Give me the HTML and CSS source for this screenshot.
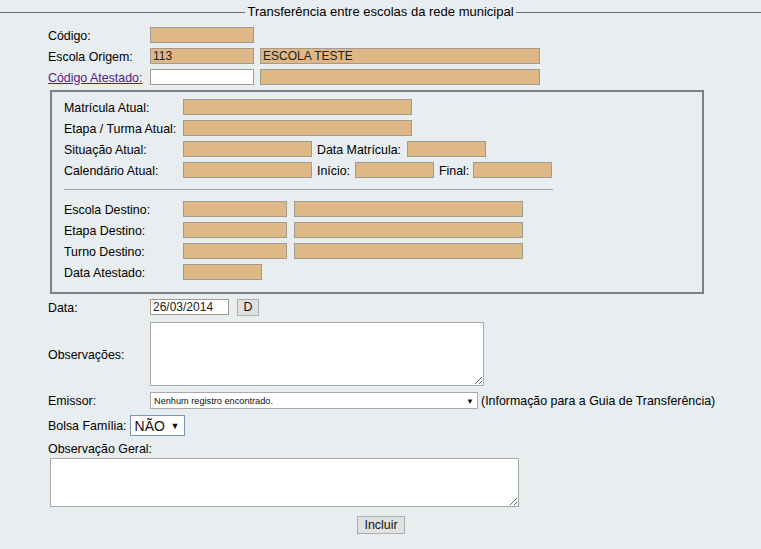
FILE: index.html
```html
<!DOCTYPE html>
<html lang="pt-BR">
<head>
<meta charset="utf-8">
<title>Transferência entre escolas da rede municipal</title>
<link rel="stylesheet" href="styles.css">
</head>
<body>
<div class="page">
  <div class="legend"><span class="legend-text">Transferência entre escolas da rede municipal</span></div>
  <form class="form">
    <div class="row r-first">
      <span class="lbl">Código:</span>
      <input class="f w104" type="text">
    </div>
    <div class="row">
      <span class="lbl">Escola Origem:</span>
      <input class="f w104" type="text" value="113">
      <input class="f w280 ml6" type="text" value="ESCOLA TESTE">
    </div>
    <div class="row">
      <span class="lbl"><a class="link" href="#">Código Atestado:</a></span>
      <input class="f white w104" type="text">
      <input class="f w280 ml6" type="text">
    </div>

    <div class="box">
      <div class="irow">
        <span class="ilbl">Matrícula Atual:</span>
        <input class="f w229" type="text">
      </div>
      <div class="irow">
        <span class="ilbl">Etapa / Turma Atual:</span>
        <input class="f w229" type="text">
      </div>
      <div class="irow">
        <span class="ilbl">Situação Atual:</span>
        <input class="f w129" type="text">
        <span class="sub w90">Data Matrícula:</span>
        <input class="f w79" type="text">
      </div>
      <div class="irow">
        <span class="ilbl">Calendário Atual:</span>
        <input class="f w129" type="text">
        <span class="sub w38">Início:</span>
        <input class="f w79" type="text">
        <span class="sub w34">Final:</span>
        <input class="f w79" type="text">
      </div>
      <div class="sep"></div>
      <div class="irow">
        <span class="ilbl">Escola Destino:</span>
        <input class="f w104" type="text">
        <input class="f w229 ml7" type="text">
      </div>
      <div class="irow">
        <span class="ilbl">Etapa Destino:</span>
        <input class="f w104" type="text">
        <input class="f w229 ml7" type="text">
      </div>
      <div class="irow">
        <span class="ilbl">Turno Destino:</span>
        <input class="f w104" type="text">
        <input class="f w229 ml7" type="text">
      </div>
      <div class="irow">
        <span class="ilbl">Data Atestado:</span>
        <input class="f w79" type="text">
      </div>
    </div>

    <div class="row r-data">
      <span class="lbl">Data:</span>
      <input class="f white w79" type="text" value="26/03/2014">
      <button class="btn btn-d" type="button">D</button>
    </div>
    <div class="row r-obs">
      <span class="lbl">Observações:</span>
      <textarea class="ta ta-obs"></textarea>
    </div>
    <div class="row r-emissor">
      <span class="lbl">Emissor:</span>
      <span class="sel-wrap sel-emissor">
        <select class="sel"><option>Nenhum registro encontrado.</option></select>
        <span class="arrow">▼</span>
      </span>
      <span class="info">(Informação para a Guia de Transferência)</span>
    </div>
    <div class="row r-bolsa">
      <span class="lbl-inline">Bolsa Família:</span>
      <span class="sel-wrap sel-bolsa">
        <select class="sel"><option>NÃO</option><option>SIM</option></select>
        <span class="arrow">▼</span>
      </span>
    </div>
    <div class="r-geral">
      <div class="lbl-block">Observação Geral:</div>
      <textarea class="ta ta-geral"></textarea>
    </div>
    <div class="actions">
      <button class="btn btn-incluir" type="button">Incluir</button>
    </div>
  </form>
</div>
</body>
</html>
```

FILE: styles.css
```css
html, body {
  margin: 0;
  padding: 0;
  background: #e8edf0;
}
body {
  font-family: "Liberation Sans", Arial, sans-serif;
  font-size: 12.4px;
  color: #000;
}
.page {
  width: 761px;
  min-height: 549px;
}
.legend {
  display: flex;
  align-items: center;
  margin-top: 5px;
  height: 14px;
  line-height: 14px;
  font-size: 13px;
}
.legend::before,
.legend::after {
  content: "";
  flex: 1;
  border-top: 1px solid #707070;
}
.legend-text {
  padding: 0 2px;
  white-space: nowrap;
}
.form {
  margin: 0;
  padding: 8px 0 0 48px;
}
.row {
  display: flex;
  align-items: center;
  height: 16px;
  margin-bottom: 5px;
}
.lbl {
  width: 102px;
  flex: none;
  line-height: 16px;
  padding-top: 1px;
  white-space: nowrap;
}
.link {
  color: #551a8b;
  text-decoration: underline;
}
.f {
  box-sizing: border-box;
  height: 16px;
  border: 1px solid #a29a8e;
  background: #deb887;
  padding: 0 2px;
  margin: 0;
  font-family: "Liberation Sans", Arial, sans-serif;
  font-size: 12px;
  color: #222;
  outline: none;
  flex: none;
}
.white { background: #fff; }
.w104 { width: 104px; }
.w280 { width: 280px; }
.w229 { width: 229px; }
.w129 { width: 129px; }
.w79 { width: 79px; }
.ml6 { margin-left: 6px; }
.ml7 { margin-left: 7px; }

.box {
  box-sizing: border-box;
  width: 654px;
  margin-left: 2px;
  border: 2px solid #808080;
  padding: 7px 12px 7px 12px;
}
.irow {
  display: flex;
  align-items: center;
  height: 16px;
  margin-bottom: 5px;
}
.ilbl {
  width: 119px;
  flex: none;
  line-height: 16px;
  padding-top: 1px;
  white-space: nowrap;
}
.sub {
  flex: none;
  margin-left: 5px;
  line-height: 16px;
  padding-top: 1px;
  white-space: nowrap;
}
.w90 { width: 90px; }
.w38 { width: 38px; }
.w34 { width: 34px; }
.sep {
  width: 489px;
  border-top: 1px solid #a0a0a0;
  margin: 11px 0 11px 0;
}

.btn {
  box-sizing: border-box;
  margin: 0;
  padding: 0;
  border: 1px solid #acacac;
  background: #e1e1e1;
  font-family: "Liberation Sans", Arial, sans-serif;
  font-size: 12.4px;
  color: #111;
}
.btn-d {
  width: 22px;
  height: 17px;
  margin-left: 8px;
}
.r-data { margin-top: 5px; }
.r-obs {
  height: 64px;
  margin-top: 7px;
  margin-bottom: 6px;
}
.ta {
  box-sizing: border-box;
  margin: 0;
  border: 1px solid #a9a9a9;
  background: #fff;
  font-family: "Liberation Sans", Arial, sans-serif;
  font-size: 12px;
  outline: none;
}
.ta-obs {
  width: 334px;
  height: 64px;
}
.r-emissor {
  height: 17px;
  margin-bottom: 6px;
}
.sel-wrap {
  position: relative;
  display: inline-block;
  flex: none;
}
.sel {
  -webkit-appearance: none;
  appearance: none;
  box-sizing: border-box;
  margin: 0;
  background: #fff;
  outline: none;
  font-family: "Liberation Sans", Arial, sans-serif;
  color: #111;
  display: block;
}
.arrow {
  position: absolute;
  top: 50%;
  transform: translateY(-50%);
  color: #111;
  pointer-events: none;
}
.sel-emissor .sel {
  width: 328px;
  height: 17px;
  border: 1px solid #a9a9a9;
  font-size: 9.2px;
  padding: 0 0 0 3px;
}
.sel-emissor .arrow {
  right: 4px;
  font-size: 8px;
}
.info {
  margin-left: 3px;
  padding-top: 1px;
  white-space: nowrap;
}
.r-bolsa {
  height: 21px;
  margin-bottom: 4px;
}
.lbl-inline {
  margin-right: 3px;
  line-height: 16px;
  padding-top: 1px;
  white-space: nowrap;
}
.sel-bolsa .sel {
  width: 55px;
  height: 21px;
  border: 1px solid #7b93b5;
  font-size: 14px;
  padding: 0 0 0 4px;
}
.sel-bolsa .arrow {
  right: 5px;
  font-size: 9px;
}
.lbl-block {
  line-height: 16px;
  height: 16px;
  padding-top: 1px;
  margin-bottom: 1px;
}
.ta-geral {
  display: block;
  width: 469px;
  height: 49px;
  margin-left: 2px;
}
.actions {
  margin-left: -47px;
  margin-top: 9px;
  text-align: center;
}
.btn-incluir {
  width: 48px;
  height: 18px;
}
```
